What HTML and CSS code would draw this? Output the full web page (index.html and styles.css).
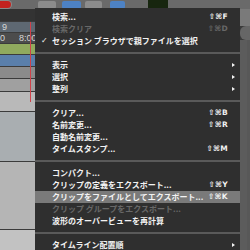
FILE: index.html
```html
<!DOCTYPE html>
<html lang="ja">
<head>
<meta charset="UTF-8" />
<title>クリップ メニュー</title>
<link rel="stylesheet" href="styles.css">
</head>
<body>
<div class="app">
  <div class="toolbar">
    <span class="rec"></span>
    <span class="tool tool-a"></span>
    <span class="tool tool-blue"></span>
    <span class="tool tool-c"></span>
    <span class="tool tool-blue tool-d"></span>
    <span class="lcd"></span>
  </div>
  <div class="workspace">
    <div class="tracks">
      <div class="band band-dark"></div>
      <div class="band ruler-a">9</div>
      <div class="band ruler-b"><span>0</span><span class="time">8:00</span></div>
      <div class="band track-green"></div>
      <div class="band track-blue"></div>
      <div class="band track-gray"></div>
      <div class="band track-gray2"></div>
      <div class="band track-light"></div>
      <div class="band track-slate"></div>
      <div class="band track-mid"></div>
      <div class="band track-bottom"></div>
      <div class="cursor-line"></div>
    </div>
    <div class="side">
      <div class="side-top"></div>
      <div class="side-btn"></div>
      <div class="side-rest"></div>
    </div>
  </div>
</div>

<div class="menu">
  <div class="item"><span class="check"></span><span class="label">検索...</span><span class="key">⇧⌘F</span><span class="sub"></span></div>
  <div class="item disabled"><span class="check"></span><span class="label">検索クリア</span><span class="key">⇧⌘D</span><span class="sub"></span></div>
  <div class="item"><span class="check">✓</span><span class="label">セッション ブラウザで親ファイルを選択</span><span class="key"></span><span class="sub"></span></div>
  <div class="sep"></div>
  <div class="item"><span class="check"></span><span class="label">表示</span><span class="key"></span><span class="sub"><i class="arrow"></i></span></div>
  <div class="item"><span class="check"></span><span class="label">選択</span><span class="key"></span><span class="sub"><i class="arrow"></i></span></div>
  <div class="item"><span class="check"></span><span class="label">整列</span><span class="key"></span><span class="sub"><i class="arrow"></i></span></div>
  <div class="sep"></div>
  <div class="item"><span class="check"></span><span class="label">クリア...</span><span class="key">⇧⌘B</span><span class="sub"></span></div>
  <div class="item"><span class="check"></span><span class="label">名前変更...</span><span class="key">⇧⌘R</span><span class="sub"></span></div>
  <div class="item"><span class="check"></span><span class="label">自動名前変更...</span><span class="key"></span><span class="sub"></span></div>
  <div class="item"><span class="check"></span><span class="label">タイムスタンプ...</span><span class="key">⇧⌘M</span><span class="sub"></span></div>
  <div class="sep"></div>
  <div class="item"><span class="check"></span><span class="label">コンパクト...</span><span class="key"></span><span class="sub"></span></div>
  <div class="item"><span class="check"></span><span class="label">クリップの定義をエクスポート...</span><span class="key">⇧⌘Y</span><span class="sub"></span></div>
  <div class="item active"><span class="check"></span><span class="label">クリップをファイルとしてエクスポート...</span><span class="key">⇧⌘K</span><span class="sub"></span></div>
  <div class="item disabled"><span class="check"></span><span class="label">クリップ グループをエクスポート...</span><span class="key"></span><span class="sub"></span></div>
  <div class="item"><span class="check"></span><span class="label">波形のオーバービューを再計算</span><span class="key"></span><span class="sub"></span></div>
  <div class="sep"></div>
  <div class="item"><span class="check"></span><span class="label">タイムライン配置順</span><span class="key"></span><span class="sub"><i class="arrow"></i></span></div>
</div>
</body>
</html>
```

FILE: styles.css
```css
:root {
  --menu-bg: #2f2f2f;
  --menu-text: #f2f2f2;
  --menu-disabled: #686868;
  --menu-sep: #5a5a5a;
  --menu-hi: #7a7a7a;
}
html, body {
  margin: 0;
  padding: 0;
  width: 250px;
  height: 250px;
  overflow: hidden;
  background: #3a3a3a;
  font-family: "Noto Sans CJK JP", "DejaVu Sans", sans-serif;
}
.app {
  display: flex;
  flex-direction: column;
  height: 250px;
}
.toolbar {
  height: 9px;
  background: #6a6a6a;
  display: flex;
  align-items: flex-start;
  gap: 0;
  flex-shrink: 0;
}
.rec {
  width: 11px;
  height: 7px;
  margin-top: 1px;
  background: #c3231f;
  border-radius: 0 4px 4px 0;
  box-shadow: 0 0 0 1px #8a8a8a;
}
.tool {
  height: 8px;
  width: 18px;
  background: #8c8c8c;
  border-radius: 2px;
  margin-top: 1px;
}
.tool-a { margin-left: 27px; }
.tool-blue { background: #4d82c4; margin-left: 6px; width: 19px; }
.tool-c { margin-left: 4px; width: 17px; }
.tool-d { margin-left: 8px; width: 15px; }
.lcd {
  width: 20px;
  height: 9px;
  margin-left: 23px;
  background: #17260f;
}
.workspace {
  flex: 1;
  display: flex;
}
.tracks {
  flex: 1;
  display: flex;
  flex-direction: column;
  position: relative;
}
.band {
  flex-shrink: 0;
  border-bottom: 1px solid #3b3b3b;
  font-family: "Liberation Sans", sans-serif;
  font-size: 9px;
  line-height: 10px;
  color: #d8d8d8;
}
.band-dark { height: 12px; background: #333; }
.ruler-a { height: 10px; background: #5e6872; padding-left: 2px; }
.ruler-b { height: 10px; background: #4c4c4c; display: flex; gap: 14px; }
.track-green { height: 10px; background: #90aa5e; }
.track-blue { height: 11px; background: #5a7fab; }
.track-gray { height: 11px; background: #8b8b8b; }
.track-gray2 { height: 12px; background: #a0a0a0; }
.track-light { height: 19px; background: #b9b9b9; }
.track-slate { height: 49px; background: #a9aeb1; }
.track-mid { height: 67px; background: #b5b5b5; }
.track-bottom { flex: 1; background: #c2c2c2; border-bottom: 0; }
.cursor-line {
  position: absolute;
  left: 30px;
  top: 13px;
  width: 1px;
  height: 80px;
  background: #d0424a;
}
.side {
  width: 10px;
  display: flex;
  flex-direction: column;
}
.side-top { height: 17px; background: #7a7a7a; }
.side-btn { height: 14px; background: #666; border-radius: 6px 0 0 6px; }
.side-rest { flex: 1; background: #585858; border-left: 7px solid #5c5c5c; }

.menu {
  position: absolute;
  left: 35px;
  top: 8px;
  width: 205px;
  height: 250px;
  padding-top: 3px;
  background: var(--menu-bg);
  color: var(--menu-text);
  font-size: 8px;
  font-weight: 700;
  box-sizing: border-box;
}
.item {
  display: grid;
  grid-template-columns: 17px 1fr auto 12px;
  height: 12px;
  line-height: 12px;
  white-space: nowrap;
}
.item.disabled { color: var(--menu-disabled); }
.item.active { background: var(--menu-hi); }
.check {
  padding-left: 6px;
  font-family: "DejaVu Sans", sans-serif;
}
.label { overflow: hidden; }
.key {
  font-family: "DejaVu Sans", sans-serif;
  font-size: 7.5px;
  letter-spacing: 0.3px;
}
.sub {
  position: relative;
}
.arrow {
  position: absolute;
  left: 4px;
  top: 4px;
  border-left: 3px solid var(--menu-text);
  border-top: 2px solid transparent;
  border-bottom: 2px solid transparent;
}
.sep {
  height: 12px;
  display: flex;
  align-items: center;
}
.sep::after {
  content: "";
  flex: 1;
  height: 2px;
  background: var(--menu-sep);
}
```
